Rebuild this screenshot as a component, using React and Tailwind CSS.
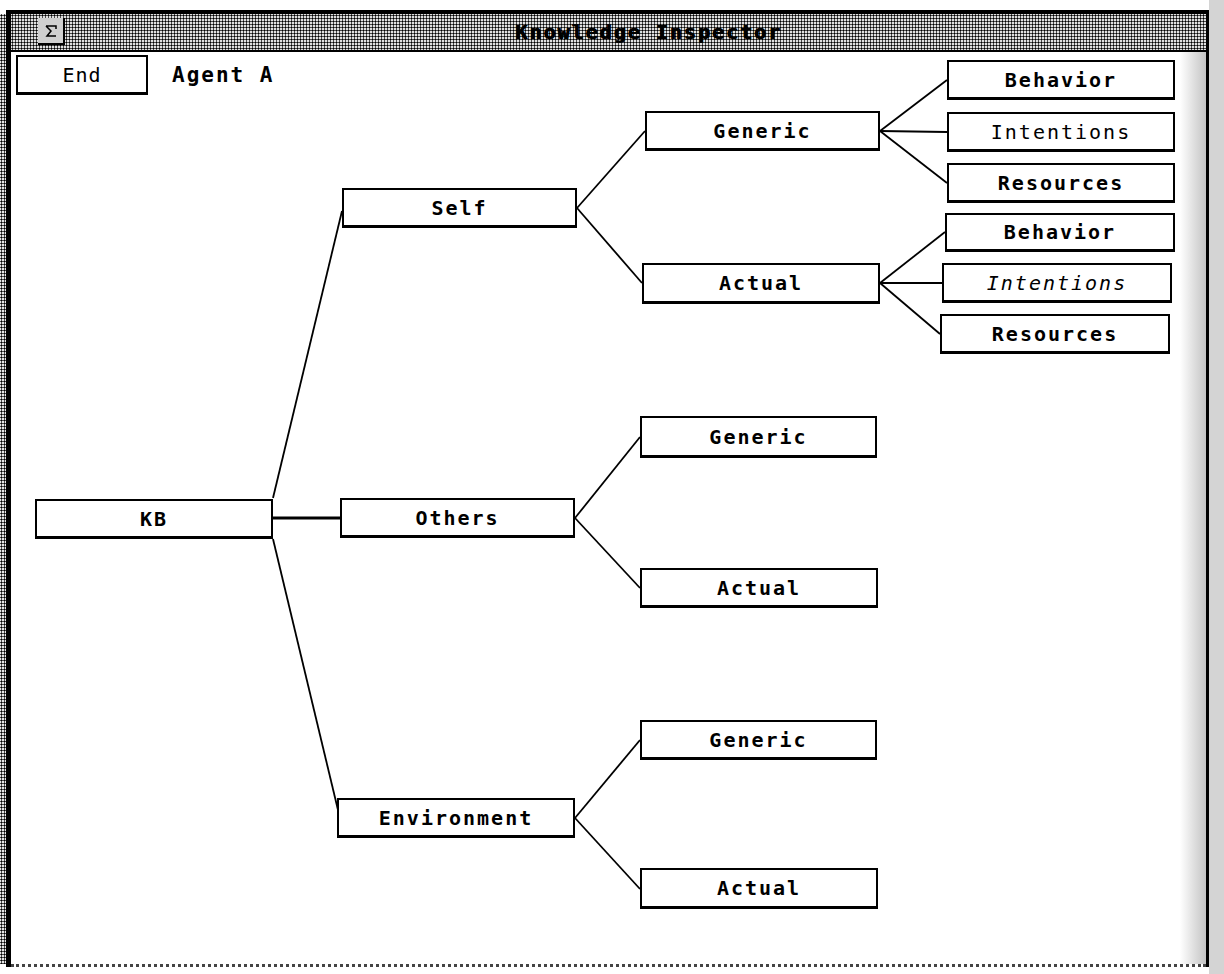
import React from 'react';

// --- Knowledge Inspector ---
const nodes = [
    { label: 'Self', pos: 'left-[331px] top-[136px] w-[235px] h-[40px]', style: 'font-bold' },
    { label: 'Generic', pos: 'left-[634px] top-[59px] w-[235px] h-[40px]', style: 'font-bold' },
    { label: 'Actual', pos: 'left-[631px] top-[211px] w-[238px] h-[41px]', style: 'font-bold' },
    { label: 'Behavior', pos: 'left-[936px] top-[8px] w-[228px] h-[40px]', style: 'font-bold' },
    { label: 'Intentions', pos: 'left-[936px] top-[60px] w-[228px] h-[40px]', style: 'font-normal' },
    { label: 'Resources', pos: 'left-[936px] top-[111px] w-[228px] h-[40px]', style: 'font-bold' },
    { label: 'Behavior', pos: 'left-[934px] top-[161px] w-[230px] h-[39px]', style: 'font-bold' },
    { label: 'Intentions', pos: 'left-[931px] top-[211px] w-[230px] h-[40px]', style: 'font-normal italic' },
    { label: 'Resources', pos: 'left-[929px] top-[262px] w-[230px] h-[40px]', style: 'font-bold' },
    { label: 'KB', pos: 'left-[24px] top-[447px] w-[238px] h-[40px]', style: 'font-bold' },
    { label: 'Others', pos: 'left-[329px] top-[446px] w-[235px] h-[40px]', style: 'font-bold' },
    { label: 'Generic', pos: 'left-[629px] top-[364px] w-[237px] h-[42px]', style: 'font-bold' },
    { label: 'Actual', pos: 'left-[629px] top-[516px] w-[238px] h-[40px]', style: 'font-bold' },
    { label: 'Generic', pos: 'left-[629px] top-[668px] w-[237px] h-[40px]', style: 'font-bold' },
    { label: 'Environment', pos: 'left-[326px] top-[746px] w-[238px] h-[40px]', style: 'font-semibold' },
    { label: 'Actual', pos: 'left-[629px] top-[816px] w-[238px] h-[41px]', style: 'font-bold' },
];

// page coordinates
const links = [
    [273, 500, 342, 213],
    [273, 541, 338, 812],
    [577, 210, 645, 133],
    [577, 210, 642, 285],
    [880, 133, 947, 82],
    [880, 133, 947, 134],
    [880, 133, 947, 185],
    [880, 285, 945, 234],
    [880, 285, 942, 285],
    [880, 285, 940, 336],
    [575, 520, 640, 439],
    [575, 520, 640, 590],
    [575, 820, 640, 742],
    [575, 820, 640, 891],
];

const Node = ({ label, pos, style }) => (
    <div className={`absolute ${pos} bg-white border-2 border-b-[3px] border-black flex items-center justify-center`}>
        <span className={`text-[20px] leading-none tracking-[2px] text-black ${style}`}>{label}</span>
    </div>
);

export default function App() {
    return (
        <div className="w-[1224px] h-[974px] bg-white flex overflow-hidden font-['DejaVu_Sans_Mono',monospace]">
            <div className="w-[6px] mt-[14px] mb-[10px] shrink-0 bg-[#e6e6e6] bg-[radial-gradient(circle,#000_0.9px,transparent_1.2px)] bg-[length:3px_3px]" />
            <div className="mt-[10px] w-[1203px] h-[957px] flex flex-col border-l-[5px] border-t-[4px] border-r-[3px] border-black bg-white shrink-0">
                {/* title bar */}
                <div className="h-[38px] shrink-0 relative flex items-center justify-center pl-[80px] border-b-2 border-black bg-[#e0e0e0] bg-[radial-gradient(circle,#000_0.9px,transparent_1.2px)] bg-[length:3px_3px]">
                    <div className="absolute left-[27px] top-[4px] w-[27px] h-[27px] border-r-2 border-b-2 border-black bg-[#cfcfcf] flex items-center justify-center">
                        <svg width="16" height="16" viewBox="0 0 16 16" fill="none" stroke="black" strokeWidth="1.5">
                            <path d="M3 3h10v3M3 3l5 5-4 5h9" />
                        </svg>
                    </div>
                    <span className="text-[20px] leading-none font-bold tracking-[2px] text-black [text-shadow:1px_0_0_#000]">Knowledge Inspector</span>
                </div>

                {/* content */}
                <div className="flex-1 relative overflow-hidden border-b-[3px] border-dotted border-[#444]">
                    <div className="absolute right-0 top-0 bottom-0 w-[26px] bg-gradient-to-r from-white to-[#c4c4c4]" />
                    <svg className="absolute left-0 top-0" width="1199" height="910" viewBox="11 54 1199 910">
                        <line x1="273" y1="520" x2="340" y2="520" stroke="black" strokeWidth="3" />
                        {links.map(([x1, y1, x2, y2], i) => (
                            <line key={i} x1={x1} y1={y1} x2={x2} y2={y2} stroke="black" strokeWidth="1.8" />
                        ))}
                    </svg>

                    <div className="relative flex items-center pl-[5px] pt-[3px] gap-[24px]">
                        <div className="w-[132px] h-[40px] bg-white border-2 border-b-[3px] border-black flex items-center justify-center">
                            <span className="text-[20px] leading-none tracking-[1px] text-black">End</span>
                        </div>
                        <span className="text-[21px] leading-none font-bold tracking-[2px] text-black">Agent A</span>
                    </div>

                    {nodes.map((n, i) => (
                        <Node key={i} {...n} />
                    ))}
                </div>
            </div>
            <div className="flex-1 bg-[#d4d4d4]" />
        </div>
    );
}
